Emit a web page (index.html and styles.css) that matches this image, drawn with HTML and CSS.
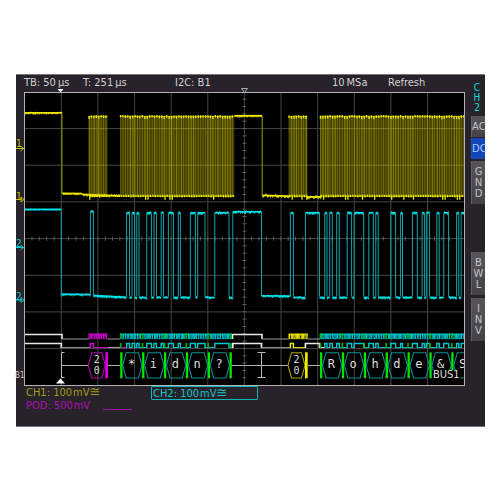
FILE: index.html
```html
<!DOCTYPE html>
<html lang="en">
<head>
<meta charset="utf-8">
<title>Oscilloscope</title>
<link rel="stylesheet" href="styles.css">
</head>
<body>
<main class="device">
  <div class="screen">
    <header class="status">
      <span>TB: 50&#8201;µs</span>
      <span>T: 251&#8201;µs</span>
      <span>I2C: B1</span>
      <span>10&#8201;MSa</span>
      <span>Refresh</span>
    </header>
    <svg class="plot" viewBox="16 90 450 296" role="img" aria-label="I2C bus traces">
      <defs><clipPath id="area"><rect x="24" y="92" width="440" height="293"/></clipPath></defs>
      <rect class="bg" x="24.5" y="92.5" width="440" height="293"/>
      <g id="traces" clip-path="url(#area)"></g>
      <rect class="frame" x="24.5" y="92.5" width="440" height="293"/>
      <path class="solid" d="M57.500 89h6l-3 3.500zM56 383.500l4.500-5 4.500 5z"/>
      <path class="hollow" d="M241.500 88.500h6l-3 4z"/>
      <g class="mark ch1"><text x="16" y="147">1</text><path d="M16 148.500h8M20.500 146l3 2.500-3 2.500"/></g>
      <g class="mark ch1"><text x="16" y="200">1</text><path d="M16 199.500h6M21 197l3 2.500-3 2.500z"/></g>
      <g class="mark ch2"><text x="16" y="247">2</text><path d="M16 247.500h8M20.500 245l3 2.500-3 2.500"/></g>
      <g class="mark ch2"><text x="16" y="300">2</text><path d="M16 300h6M21 297.500l3 2.500-3 2.500z"/></g>
      <text class="bus-mark" x="15" y="378">B1</text>
      <rect class="bg" x="433" y="370" width="27" height="9"/>
      <text class="bus-name" x="433" y="378">BUS1</text>
    </svg>
    <footer class="channels">
      <span class="ch1-info">CH1: 100&#8202;mV<span class="coupling">≅</span></span>
      <button class="ch2-info">CH2: 100&#8202;mV<span class="coupling">≅</span></button>
      <span class="pod-info">POD: 500&#8202;mV</span>
      <span class="pod-line"></span>
    </footer>
  </div>
  <nav class="side" aria-label="Channel 2 settings">
    <h2 class="side-title">C<br>H<br>2</h2>
    <button class="key">AC</button>
    <button class="key active">DC</button>
    <button class="key tall">G<br>N<br>D</button>
    <button class="key tall lower">B<br>W<br>L</button>
    <button class="key tall">I<br>N<br>V</button>
  </nav>
</main>
<script src="scope.js"></script>
</body>
</html>
```

FILE: styles.css
```css
* { box-sizing: border-box; }

body {
  margin: 0;
  padding: 74px 15px 73px 16px;
  background: #fff;
  font: 11px/14px "DejaVu Sans Condensed", "DejaVu Sans", sans-serif;
}

button { font: inherit; margin: 0; padding: 0; }

.device {
  display: flex;
  background: #28222a;
  border-top: 1px solid #77747a;
  border-bottom: 1px solid #77747a;
}

.screen { flex: 1; min-width: 0; padding-bottom: 14px; }

.status {
  display: grid;
  grid-template-columns: 59fr 92fr 157fr 56fr 78fr;
  padding: 1px 0 0 8px;
  color: #d4d0d4;
  white-space: nowrap;
}

.plot { display: block; width: 100%; overflow: visible; }

.bg { fill: #000; }
.frame { fill: none; stroke: #b4b4b4; }
.grid { fill: none; stroke: #454545; }
.ticks { fill: none; stroke: #5c5c5c; }
.solid { fill: #fff; }
.hollow { fill: #28222a; stroke: #aaa; }

.mark path { fill: none; stroke: currentColor; }
.mark text { font-size: 10px; fill: currentColor; }
.mark.ch1 { color: #c9c400; }
.mark.ch2 { color: #00cdd2; }
.bus-mark { font-size: 8px; fill: #ccc; }
.bus-name { font-size: 11px; fill: #ddd; }
.glyph { font: 12px "DejaVu Sans Mono", monospace; fill: #ddd; text-anchor: middle; }
.glyph.small { font-size: 10px; }

.channels {
  display: grid;
  grid-template-columns: 77fr 48fr 107fr 208fr;
  padding-left: 10px;
  white-space: nowrap;
}

.ch1-info { grid-column: span 2; color: #a29d12; }

.ch2-info {
  height: 14px;
  padding: 0 1px;
  border: 1px solid #12b4bb;
  border-radius: 1px;
  background: none;
  color: #12c4ca;
  line-height: 12px;
  text-align: left;
}

.coupling { font-family: "DejaVu Sans", sans-serif; font-size: 13px; line-height: 12px; }

.pod-info { grid-column: 1; line-height: 12px; color: #b010b4; }
.pod-line { width: 29px; height: 10px; border-bottom: 1px solid #a010a4; }

.side {
  display: flex;
  flex-direction: column;
  width: 19px;
  padding: 8px 0 0 5px;
  line-height: 11px;
  text-align: center;
}

.side-title {
  margin: 0 0 1px;
  padding-right: 2px;
  font-size: 10px;
  font-weight: normal;
  line-height: 10px;
  color: #10dce2;
  height: 32px;
}

.key {
  height: 21px;
  margin-bottom: 1px;
  border: 0;
  border-left: 1px solid #625e66;
  background: linear-gradient(#58545c, #454149);
  color: #c4c2c6;
  font-family: "DejaVu Sans", sans-serif;
  font-size: 10px;
}

.key.active { margin-bottom: 2px; border-color: #1450c8; background: #1245b8; color: #a9c8ff; }
.key.tall { height: 43px; margin-bottom: 3px; }
.key.lower { margin-top: 45px; }
```

FILE: scope.js
```js
const NS = "http://www.w3.org/2000/svg";
const root = document.getElementById("traces");

const YELLOW = "#f0ea00", CYAN = "#00e4ea", TEAL = "#0b8f93";
const MAGENTA = "#d800dc", GREEN = "#00e600", GREY = "#9a9a9a", WHITE = "#e8e8e8";

function el(tag, attrs, text) {
  const node = document.createElementNS(NS, tag);
  for (const key in attrs) node.setAttribute(key, attrs[key]);
  if (text) node.textContent = text;
  root.appendChild(node);
}

function line(d, stroke, width = 1, opacity = 1) {
  el("path", { d, fill: "none", stroke, "stroke-width": width, "stroke-opacity": opacity });
}

function noise(n) {
  const v = Math.sin(n * 12.9898) * 43758.5453;
  return v - Math.floor(v);
}

// Noisy horizontal stretch of a trace.
function level(x1, x2, y1, y2, color, spread = 1) {
  line(`M${x1} ${y1}L${x2} ${y2}`, color, 1.8);
  let spikes = "";
  for (let x = x1 + 0.7; x < x2; x += 1) {
    const r = noise(x * 3.1 + y1);
    const y = y1 + (y2 - y1) * (x - x1) / (x2 - x1);
    if (r > 0.5) spikes += `M${x.toFixed(1)} ${y.toFixed(1)}v${(1 + r * 1.3 * spread).toFixed(1)}`;
    else if (r < 0.15) spikes += `M${x.toFixed(1)} ${y.toFixed(1)}v${(-1.6 * spread).toFixed(1)}`;
  }
  line(spikes, color, 1, 0.85);
}

// Graticule
let grid = "";
for (let i = 1; i < 12; i++) grid += `M${(24.7 + i * 36.62).toFixed(1)} 93V385`;
for (let i = 1; i < 8; i++) grid += `M25 ${(91.9 + i * 36.67).toFixed(1)}H464`;
el("path", { d: grid, class: "grid" });
let ticks = "";
for (let i = 1; i < 60; i++) ticks += `M${(24.7 + i * 7.32).toFixed(1)} 236.6v4`;
for (let i = 1; i < 40; i++) ticks += `M242.4 ${(91.9 + i * 7.33).toFixed(1)}h4`;
el("path", { d: ticks, class: "ticks" });

// Channel 1: clock
const bursts = [[89, 107.5], [120.5, 234.3], [289, 307.5], [320.4, 465]];
level(25, 62, 112.8, 112.8, YELLOW, 0.6);
level(62, 82, 193.4, 193.7, YELLOW, 0.5);
level(82, 120, 194.3, 196, YELLOW);
level(234.5, 262, 115.8, 115.8, YELLOW, 0.6);
level(262, 289, 195.3, 196.2, YELLOW);
level(307, 321, 197, 197, YELLOW);
line("M61.9 113V194M262.2 116V196", "#a09b00");
bursts.forEach(([a, b]) => {
  el("rect", { x: a, y: 117, width: b - a, height: 79, fill: "#e0da00", "fill-opacity": 0.27 });
  let dim = "", bright = "", tips = "";
  for (let x = a; x <= b; x += 2.43) {
    const r = noise(x);
    dim += `M${x.toFixed(1)} 116V196`;
    if (r > 0.5) bright += `M${(x + 0.4).toFixed(1)} 116V196`;
    tips += `M${x.toFixed(1)} ${(115 + r).toFixed(1)}v${(2.3 + r).toFixed(1)}`;
    tips += `M${(x + 0.8).toFixed(1)} 194.8v${(2 + (r > 0.8 ? 3 : r)).toFixed(1)}`;
  }
  line(dim, "#b8b300", 0.8, 0.5);
  line(bright, "#c9c400", 0.8, 0.4);
  line(`M${a} 116.300H${b}M${a} 196.300H${b}`, YELLOW, 1.2, 0.6);
  line(tips, YELLOW, 1.3);
});

// Channel 2: data, as the spans during which the line is high
const highs = [
  [24, 61.3], [90.4, 93.4], [126.6, 129.5], [132, 134.7], [136.8, 139], [146.8, 151.4],
  [154, 156.4], [161.2, 163.4], [168.4, 173.4], [178.3, 180.4], [190.3, 195.4], [197.7, 205],
  [214.8, 229], [232.8, 261.5], [290.4, 293.4], [305.4, 319.5], [324.8, 327], [329.7, 332.3],
  [336.7, 339.3], [347.2, 351.6], [354.2, 363.7], [368.8, 373.3], [375.8, 378.2],
  [390.8, 395.6], [400.6, 402.5], [412.4, 417.3], [422.1, 424.4], [426.3, 429.6],
  [436.8, 439.2], [443.8, 448.6], [456.6, 458.8], [461.2, 466]
];
let edges = "";
highs.forEach(([a, b], i) => {
  const top = i === 0 ? 209.3 : i === 1 ? 211.3 : i === 13 ? 211.8 : 212.8;
  edges += `M${a} ${top}V296.500M${b} ${top}V296.500`;
  level(a, b, top, top, CYAN, i === 0 ? 0.2 : 0.9);
  const next = highs[i + 1];
  if (!next) return;
  const low = i === 0 ? 294.2 : i === 1 ? 295.5 : i === 13 ? 295.8 : 297.3;
  level(b, next[0], low, i === 1 ? 297.5 : low + 0.4, CYAN, 0.9);
});
line(edges, "#12a6aa", 1, 1);

// Logic rows: row A is the clock, row B the data
function tint(x) {
  if (x >= 88 && x < 108) return MAGENTA;
  if (x >= 288 && x < 305) return YELLOW;
  if ((x >= 120 && x < 232) || x >= 320) return "#00c8ce";
  return WHITE;
}
line("M24 334.500H62V339M232.500 339V334.500H262V339", WHITE, 1.6);
line("M62 339H89M107.500 339H120.500M262 339H289M307.500 339H320", GREY, 1.2);
[[89, 107.5], [120.5, 232], [289, 307.5], [320.4, 465]].forEach(([a, b]) => {
  const color = tint(a);
  line(`M${a} 334.500H${b}`, color, 2, 0.65);
  let d = "";
  for (let x = a; x < b; x += 2.43) d += `M${x.toFixed(1)} 333.700V338.500h${noise(x) > 0.5 ? 1.2 : 0.5}V333.700`;
  line(d, color, 1);
  line(`M${a} 338.800H${b}`, color, 0.9, 0.55);
});
highs.forEach(([a, b], i) => {
  const color = tint(a);
  line(`M${a} 348V343.500H${b}V348`, color, i === 0 || color === WHITE ? 1.7 : 1.4);
  const next = highs[i + 1];
  if (next) line(`M${b} 347.600H${next[0]}`, i === 0 || i === 13 ? GREY : i === 1 ? MAGENTA : tint(b), 1);
});
line("M108 347.500H120", GREY, 1.2);

// Decoded bus row
line("M61.500 365.500H88M108 365.500H120M231.700 365.500H288M308 365.500H320", "#b0b0b0");
line("M64.500 352.500H61.500V377.500H64.500M257.500 352.500H265.500M261.500 352.500V377.500M257.500 377.500H265.500", "#b8b8b8");

function hex(a, b, color) {
  line(`M${a} 365.300L${a + 3.5} 352.700H${b - 3.5}L${b} 365.300L${b - 3.5} 378H${a + 3.5}Z`, color, 1.1);
}
function bar(x, color, width = 2.3) {
  el("rect", { x, y: 352.3, width, height: 26, fill: color });
}
function glyph(x, y, text, kind = "glyph") {
  el("text", { x, y, class: kind }, text);
}
[[88.3, MAGENTA, "#b000b4"], [288, YELLOW, "#aaa500"]].forEach(([x, strong, soft]) => {
  hex(x, x + 17, soft);
  bar(x + 17, strong, 2.7);
  glyph(x + 8.5, 363, "2", "glyph small");
  glyph(x + 8.5, 374, "0", "glyph small");
});
[[120.2, "*idn?"], [320, "Rohde&S"]].forEach(([start, chars]) => {
  [...chars].forEach((c, i) => {
    const x = start + i * 21.88;
    bar(x, GREEN);
    line(`M${x + 0.5} 333V339M${x + 0.5} 343V348`, "#00b800", 1.6);
    hex(x + 2.5, x + 21.8, TEAL);
    glyph(x + 11.3, 368, c);
  });
});
bar(229.5, GREEN);
line("M231 333V339M231 343V348", "#00b800", 1.6);
```
